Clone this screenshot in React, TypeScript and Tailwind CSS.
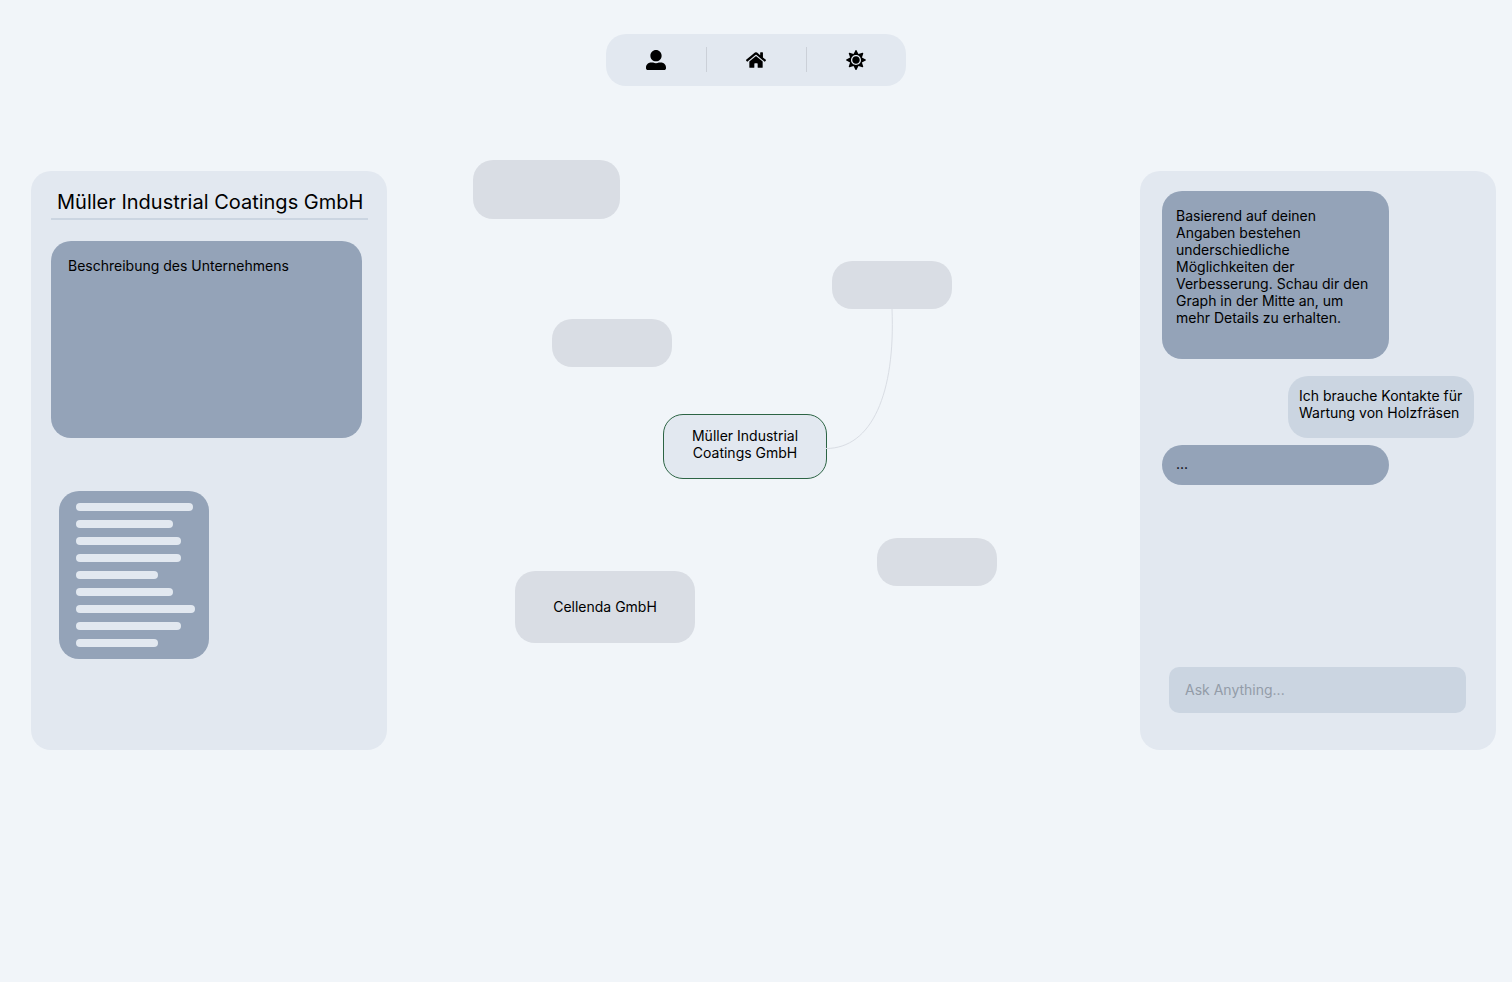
import type { ReactNode } from "react";
import { FaHome, FaSun, FaUserAlt } from "react-icons/fa";

function NavButton({ label, children }: { label: string; children: ReactNode }) {
  return (
    <button type="button" aria-label={label} className="flex h-full flex-1 items-center justify-center">
      {children}
    </button>
  );
}

function TopNav() {
  return (
    <nav className="flex h-[52px] w-[300px] items-center rounded-[20px] bg-[#e2e8f0]">
      <NavButton label="Profil">
        <FaUserAlt className="size-5" />
      </NavButton>
      <span className="-mr-px mb-0.5 h-[25px] w-px bg-[#cbd0d8]" />
      <NavButton label="Startseite">
        <FaHome className="size-5" />
      </NavButton>
      <span className="-mr-px mb-0.5 h-[25px] w-px bg-[#cbd0d8]" />
      <NavButton label="Darstellung">
        <FaSun className="size-5" />
      </NavButton>
    </nav>
  );
}

const documentLines = [
  "w-[117px]",
  "w-[97px]",
  "w-[105px]",
  "w-[105px]",
  "w-[82px]",
  "w-[97px]",
  "w-[119px]",
  "w-[105px]",
  "w-[82px]",
];

function CompanyPanel() {
  return (
    <aside className="mt-[11px] min-h-[579px] w-[356px] shrink-0 rounded-[20px] bg-[#e2e8f0] px-5 pt-[19px] pb-5">
      <h1 className="-mr-px border-b-2 border-[#cbd5e1] pb-1 pl-[6px] text-xl leading-6 whitespace-nowrap">
        Müller Industrial Coatings GmbH
      </h1>
      <section className="mt-[21px] mr-[5px] min-h-[197px] rounded-[20px] bg-[#94a3b8] px-[17px] py-4">
        <p>Beschreibung des Unternehmens</p>
      </section>
      <div className="mt-[53px] ml-2 flex w-[150px] flex-col gap-[9px] rounded-[20px] bg-[#94a3b8] px-[17px] py-3">
        {documentLines.map((width, i) => (
          <span key={i} className={`h-2 shrink-0 rounded-full bg-[#e2e8f0] ${width}`} />
        ))}
      </div>
    </aside>
  );
}

function GraphNode({ place, children }: { place: string; children?: ReactNode }) {
  return (
    <div className={`absolute flex items-center justify-center rounded-[20px] bg-[#d9dde4] pb-0.5 ${place}`}>
      {children}
    </div>
  );
}

function Graph() {
  return (
    <div className="flex min-w-0 flex-1 justify-center">
      <div className="relative h-[590px] w-[753px] shrink-0">
        <GraphNode place="left-[86px] top-0 h-[59px] w-[147px]" />
        <GraphNode place="left-[445px] top-[101px] h-12 w-[120px]" />
        <GraphNode place="left-[165px] top-[159px] h-12 w-[120px]" />
        <GraphNode place="left-[490px] top-[378px] h-12 w-[120px]" />
        <GraphNode place="left-[128px] top-[411px] h-[72px] w-[180px]">Cellenda GmbH</GraphNode>
        <div className="absolute top-[254px] left-[276px] h-[65px] w-[164px] rounded-[20px] border border-[#2c6444] bg-[#e2e8f0] pt-3 text-center">
          Müller Industrial
          <br />
          Coatings GmbH
        </div>
        <svg
          className="absolute top-[149px] left-[439px]"
          width="70"
          height="142"
          viewBox="0 0 70 142"
          fill="none"
          aria-hidden="true"
        >
          <path d="M66 0C69.5 84 46 139.5 0 139.5" stroke="#d9dde4" />
        </svg>
      </div>
    </div>
  );
}

function ChatPanel() {
  return (
    <aside className="mt-[11px] flex min-h-[579px] w-[356px] shrink-0 flex-col rounded-[20px] bg-[#e2e8f0] px-[22px] pt-5 pb-[37px]">
      <p className="w-[227px] rounded-[20px] bg-[#94a3b8] px-[14px] pt-4 pb-[33px]">
        Basierend auf deinen Angaben bestehen underschiedliche Möglichkeiten der Verbesserung. Schau dir den
        Graph in der Mitte an, um mehr Details zu erhalten.
      </p>
      <p className="mt-[17px] w-[186px] self-end rounded-[20px] bg-[#cbd5e1] px-[11px] pt-[11px] pb-[17px]">
        Ich brauche Kontakte für Wartung von Holzfräsen
      </p>
      <p className="mt-[7px] w-[227px] rounded-[20px] bg-[#94a3b8] px-[14px] pt-[10px] pb-[13px]">...</p>
      <form className="mt-auto mr-2 ml-[7px]" onSubmit={(e) => e.preventDefault()}>
        <input
          type="text"
          aria-label="Ask Anything"
          placeholder="Ask Anything..."
          className="block h-[46px] w-full rounded-[10px] bg-[#cbd5e1] px-4 pb-0.5 placeholder:text-[#939ca8] focus:outline-none"
        />
      </form>
    </aside>
  );
}

export default function App() {
  return (
    <div className="min-h-screen bg-[#f1f5f9] font-['Inter',sans-serif] text-sm leading-[17px] text-black">
      <header className="flex justify-center pt-[34px]">
        <TopNav />
      </header>
      <main className="mt-[74px] flex items-start pr-4 pl-[31px]">
        <CompanyPanel />
        <Graph />
        <ChatPanel />
      </main>
    </div>
  );
}
